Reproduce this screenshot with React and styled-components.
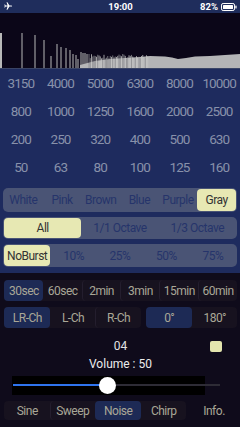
import React from 'react';
import styled, { createGlobalStyle } from 'styled-components';

const GlobalStyle = createGlobalStyle`
  html, body { margin: 0; padding: 0; background: #0f0b1b; }
  body { font-family: Roboto, "Liberation Sans", sans-serif; }
  * { box-sizing: border-box; }
`;

const Screen = styled.div`
  width: 240px;
  height: 427px;
  overflow: hidden;
  background: #0f0b1b;
  display: flex;
  flex-direction: column;
`;

const StatusBar = styled.div`
  height: 13px;
  background: #1f2d5c;
  color: #fff;
  display: grid;
  grid-template-columns: 1fr auto 1fr;
  align-items: center;
  padding: 0 3px 0 4px;
  font-size: 9.5px;
  font-weight: 700;

  .right {
    display: flex;
    justify-content: flex-end;
    align-items: center;
    gap: 3px;
  }
`;

const Spectrum = styled.div`
  height: 56px;
  background: #0b0618;
  svg { display: block; }
`;

const BluePanel = styled.div`
  background: #1e2b5e;
  padding: 0 3px 6px;
  display: flex;
  flex-direction: column;
  gap: 5px;
`;

const FreqGrid = styled.div`
  margin: 0 -2px 2px;
  display: grid;
  grid-template-columns: repeat(6, 1fr);
  grid-auto-rows: 28px;
  align-items: center;
  justify-items: center;
  color: #8891aa;
  font-size: 13.5px;
  letter-spacing: -0.9px;
`;

const Segmented = styled.div`
  height: ${p => p.$h}px;
  background: #4a5475;
  border-radius: 5px;
  display: grid;
  grid-template-columns: repeat(${p => p.$n}, 1fr);
  padding: 1px;
`;

const Seg = styled.div`
  display: flex;
  align-items: center;
  justify-content: center;
  border-radius: 4px;
  font-size: 12px;
  letter-spacing: -0.5px;
  color: ${p => (p.$on ? '#333' : '#26346b')};
  background: ${p => (p.$on ? '#e7e8b3' : 'transparent')};
`;

const DarkPanel = styled.div`
  padding: 7px 3px 0 4px;
  display: flex;
  flex-direction: column;
  gap: 6px;
`;

const DarkRow = styled.div`
  display: flex;
  gap: 5px;
`;

const DarkGroup = styled.div`
  flex: ${p => p.$flex};
  height: ${p => p.$h || 21}px;
  background: #17121f;
  border-radius: 4px;
  display: grid;
  grid-template-columns: repeat(${p => p.$n}, 1fr);
`;

const DarkSeg = styled.div`
  display: flex;
  align-items: center;
  justify-content: center;
  font-size: 12px;
  letter-spacing: -0.5px;
  color: #a9a797;
  border-radius: 4px;
  background: ${p => (p.$on ? '#1d2a55' : 'transparent')};
  border-left: 1px solid ${p => (p.$first || p.$on ? 'transparent' : '#241e2e')};
`;

const Counter = styled.div`
  display: grid;
  grid-template-columns: 1fr auto 1fr;
  align-items: center;
  height: 14px;
  margin-top: 5px;
  color: #e2e2e2;
  font-size: 12px;
`;

const YellowBox = styled.div`
  justify-self: end;
  margin-right: 15px;
  width: 12px;
  height: 11px;
  border-radius: 2px;
  background: #e3e5ae;
`;

const VolumeLabel = styled.div`
  text-align: center;
  color: #ececec;
  font-size: 12px;
  height: 14px;
  line-height: 14px;
  margin-top: -2px;
`;

const SliderRow = styled.div`
  padding-left: 8px;
  height: 19px;
  margin-top: -1px;
`;

const SliderBox = styled.div`
  position: relative;
  width: 193px;
  height: 19px;
  background: #000;
`;

const Track = styled.div`
  position: absolute;
  left: 1px;
  top: 8px;
  width: 207px;
  height: 2px;
  background: #2e2c36;
`;

const Fill = styled.div`
  position: absolute;
  left: 0;
  top: 0;
  height: 2px;
  background: #2f74ee;
`;

const Thumb = styled.div`
  position: absolute;
  top: 1px;
  width: 17px;
  height: 17px;
  border-radius: 50%;
  background: #fff;
`;

const InfoBtn = styled.div`
  flex: 47;
  display: flex;
  align-items: center;
  justify-content: center;
  font-size: 12px;
  letter-spacing: -0.5px;
  color: #a9a797;
`;

const freqRows = [
  ['3150', '4000', '5000', '6300', '8000', '10000'],
  ['800', '1000', '1250', '1600', '2000', '2500'],
  ['200', '250', '320', '400', '500', '630'],
  ['50', '63', '80', '100', '125', '160'],
];

const peaks = [
  [1, 33, 2], [22, 33], [35, 35], [44, 40], [51, 56], [57, 44], [61, 47],
  [66, 48], [70, 50], [73, 54], [76, 55], [78, 59], [81, 52], [83, 53],
  [85, 53], [87, 54],
];

// pseudo random but stable
const rnd = i => {
  const s = Math.sin(i * 12.9898) * 43758.5453;
  return s - Math.floor(s);
};

const dense = [];
for (let i = 0; i < 48; i++) {
  const x = 89 + i * 1.25;
  dense.push({ x, top: 54 + rnd(i) * 4.5, shade: rnd(i + 99) > 0.5 ? '#c4c4c4' : '#8e8e92' });
}

const SpectrumSvg = () => (
  <svg width="240" height="56" viewBox="0 13 240 56">
    <polygon
      points="80,69 80,65 95,61 110,59 125,58 140,57 150,56 165,56.5 172,57.5 178,59 186,58 195,56.5 210,56 225,55 240,54 240,69"
      fill="#b4b4b6"
    />
    {dense.map((d, i) => (
      <line key={i} x1={d.x} x2={d.x} y1={d.top} y2={69} stroke={d.shade} strokeWidth="0.8" />
    ))}
    {peaks.map(([x, top, w], i) => (
      <line key={i} x1={x} x2={x} y1={top} y2={69} stroke="#b8b8b8" strokeWidth={w || 1} />
    ))}
    <line x1="0" x2="240" y1="68.5" y2="68.5" stroke="#3a4466" strokeWidth="1" />
  </svg>
);

const Plane = () => (
  <svg width="9" height="8" viewBox="0 0 24 22" fill="#fff">
    <path d="M22 11c0-1-1-1.6-2-1.6h-5.4L9 1H6.6l2.8 8.4H4.2L2.4 7H0.5l1.2 4-1.2 4h1.9l1.8-2.4h5.2L6.6 21H9l5.6-8.4H20c1 0 2-.6 2-1.6z" />
  </svg>
);

const Battery = () => (
  <svg width="16" height="8" viewBox="0 0 16 8">
    <rect x="0.5" y="0.5" width="13" height="7" rx="1.6" fill="none" stroke="#fff" strokeWidth="1" />
    <rect x="2" y="2" width="10" height="4" rx="0.6" fill="#fff" />
    <rect x="14.3" y="2.5" width="1.3" height="3" rx="0.5" fill="#fff" />
  </svg>
);

const SegControl = ({ items, active, h }) => (
  <Segmented $n={items.length} $h={h}>
    {items.map(t => (
      <Seg key={t} $on={t === active}>{t}</Seg>
    ))}
  </Segmented>
);

const DarkControl = ({ items, active, flex, h }) => (
  <DarkGroup $n={items.length} $flex={flex} $h={h}>
    {items.map((t, i) => (
      <DarkSeg key={t} $on={t === active} $first={i === 0 || items[i - 1] === active}>{t}</DarkSeg>
    ))}
  </DarkGroup>
);

export default function App() {
  const volume = 50;
  return (
    <Screen>
      <GlobalStyle />
      <StatusBar>
        <div><Plane /></div>
        <div>19:00</div>
        <div className="right"><span>82%</span><Battery /></div>
      </StatusBar>
      <Spectrum><SpectrumSvg /></Spectrum>
      <BluePanel>
        <FreqGrid>
          {freqRows.flat().map(f => <div key={f}>{f}</div>)}
        </FreqGrid>
        <SegControl h={24} items={['White', 'Pink', 'Brown', 'Blue', 'Purple', 'Gray']} active="Gray" />
        <SegControl h={22} items={['All', '1/1 Octave', '1/3 Octave']} active="All" />
        <SegControl h={23} items={['NoBurst', '10%', '25%', '50%', '75%']} active="NoBurst" />
      </BluePanel>
      <DarkPanel>
        <DarkRow>
          <DarkControl flex={1} items={['30sec', '60sec', '2min', '3min', '15min', '60min']} active="30sec" />
        </DarkRow>
        <DarkRow>
          <DarkControl flex={137} items={['LR-Ch', 'L-Ch', 'R-Ch']} active="LR-Ch" />
          <DarkControl flex={91} items={['0°', '180°']} active="0°" />
        </DarkRow>
        <Counter>
          <span />
          <span>04</span>
          <YellowBox />
        </Counter>
        <VolumeLabel>Volume : {volume}</VolumeLabel>
        <SliderRow>
          <SliderBox>
            <Track>
              <Fill style={{ width: `${(volume / 100) * 190}px` }} />
            </Track>
            <Thumb style={{ left: `${(volume / 100) * 190 - 8}px` }} />
          </SliderBox>
        </SliderRow>
        <DarkRow>
          <DarkControl flex={186} h={19} items={['Sine', 'Sweep', 'Noise', 'Chirp']} active="Noise" />
          <InfoBtn>Info.</InfoBtn>
        </DarkRow>
      </DarkPanel>
    </Screen>
  );
}
